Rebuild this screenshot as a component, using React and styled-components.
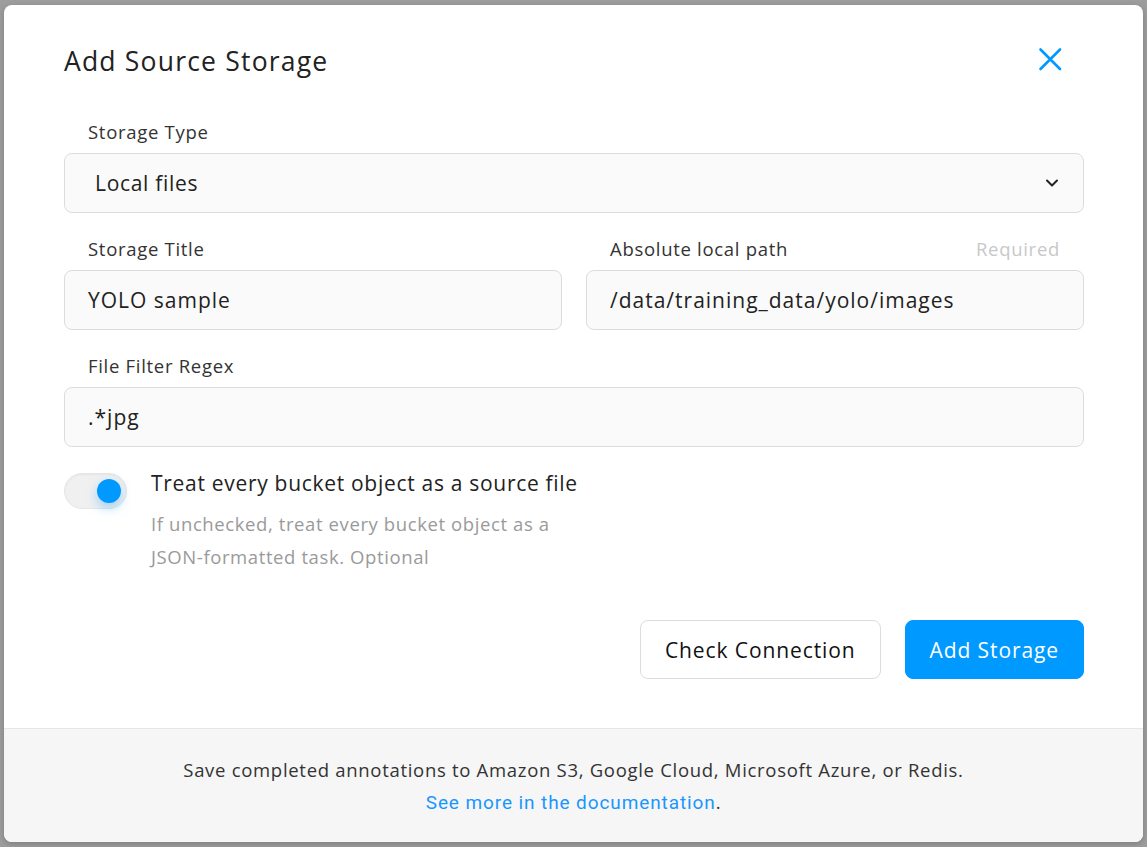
import React from "react";
import styled, { createGlobalStyle } from "styled-components";

const GlobalStyle = createGlobalStyle`
  * { box-sizing: border-box; }
  html, body { margin: 0; height: 100%; }
  body {
    background: #9d9d9d;
    padding: 5px 4px;
    font-family: "Open Sans", "Noto Sans", sans-serif;
    color: #222;
  }
  #root { height: 100%; }
`;

const Modal = styled.div`
  height: 100%;
  background: #fff;
  border-radius: 8px;
  overflow: hidden;
  display: flex;
  flex-direction: column;
  box-shadow: 0 2px 6px rgba(0, 0, 0, 0.2);
`;

const Body = styled.div`
  flex: 1;
  padding: 36px 59px 0 60px;
  display: flex;
  flex-direction: column;
`;

const Header = styled.div`
  height: 40px;
  display: flex;
  align-items: center;
  justify-content: space-between;
  margin-bottom: 38px;
`;

const Title = styled.h2`
  margin: 0;
  font-size: 26.5px;
  font-weight: 400;
  line-height: 40px;
  color: #222;
  letter-spacing: 1.2px;
`;

const CloseButton = styled.button`
  width: 44px;
  height: 44px;
  margin-right: 12px;
  margin-top: -4px;
  border: none;
  background: transparent;
  display: flex;
  align-items: center;
  justify-content: center;
  padding: 0;
  cursor: pointer;
`;

const Form = styled.div`
  display: flex;
  flex-direction: column;
  gap: 23px;
`;

const Row = styled.div`
  display: grid;
  grid-template-columns: ${(p) => (p.$cols === 2 ? "1fr 1fr" : "1fr")};
  gap: 24px;
`;

const Field = styled.div`
  display: flex;
  flex-direction: column;
  gap: 10px;
`;

const LabelRow = styled.div`
  display: flex;
  justify-content: space-between;
  padding: 0 24px;
  height: 24px;
  align-items: center;
`;

const Label = styled.span`
  font-size: 18.5px;
  letter-spacing: 0.7px;
  color: #333;
`;

const Required = styled.span`
  font-size: 18.5px;
  letter-spacing: 0.7px;
  color: #c8c8c8;
`;

const InputBox = styled.div`
  height: 60px;
  background: #fafafa;
  border: 1px solid #dcdcdc;
  border-radius: 8px;
  display: flex;
  align-items: center;
  justify-content: space-between;
  padding: ${(p) => (p.$select ? "0 24px 0 30px" : "0 23px")};
  font-size: 21px;
  letter-spacing: ${(p) => (p.$select ? "0.7px" : "1px")};
  color: #222;
`;

const ToggleRow = styled.div`
  display: flex;
  align-items: flex-start;
  gap: 24px;
  margin-top: 3px;
`;

const Track = styled.div`
  width: 63px;
  height: 36px;
  border-radius: 18px;
  background: #f0f0f0;
  border: 1px solid #e6e6e6;
  box-shadow: inset 0 1px 2px rgba(0, 0, 0, 0.05);
  display: flex;
  align-items: center;
  justify-content: flex-end;
  padding-right: 5px;
  flex-shrink: 0;
`;

const Knob = styled.div`
  width: 24px;
  height: 24px;
  border-radius: 50%;
  background: #0099ff;
  box-shadow: 0 5px 12px rgba(0, 153, 255, 0.35);
`;

const ToggleText = styled.div`
  display: flex;
  flex-direction: column;
  margin-top: -4px;
`;

const ToggleTitle = styled.div`
  font-size: 21px;
  letter-spacing: 0.7px;
  line-height: 28px;
  color: #222;
  margin-bottom: 10px;
`;

const Hint = styled.div`
  font-size: 18.5px;
  letter-spacing: 0.6px;
  line-height: 33px;
  color: #9a9a9a;
`;

const Actions = styled.div`
  display: flex;
  justify-content: flex-end;
  gap: 24px;
  margin-top: 47px;
`;

const Button = styled.button`
  height: 59px;
  padding: 0 24px;
  border-radius: 8px;
  font-family: inherit;
  font-size: 21px;
  letter-spacing: 0.9px;
  cursor: pointer;
  border: 1px solid ${(p) => (p.$primary ? "#0099ff" : "#dcdcdc")};
  background: ${(p) => (p.$primary ? "#0099ff" : "#fff")};
  color: ${(p) => (p.$primary ? "#fff" : "#111")};
`;

const Footer = styled.div`
  height: 114px;
  flex-shrink: 0;
  background: #f6f6f6;
  border-top: 1px solid #e6e6e6;
  display: flex;
  flex-direction: column;
  align-items: center;
  justify-content: center;
  padding-top: 2px;
  font-size: 18.5px;
  letter-spacing: 0.7px;
  line-height: 32px;
  color: #333;
  text-align: center;
`;

const Link = styled.a`
  color: #1a96ff;
  text-decoration: none;
  font-family: Roboto, "Open Sans", sans-serif;
  font-size: 19px;
  letter-spacing: 0.9px;
`;

const CloseIcon = () => (
  <svg width="24" height="24" viewBox="0 0 24 24" fill="none">
    <path d="M2.5 2.5L22 22M22 2.5L2.5 22" stroke="#0099ff" strokeWidth="2.6" strokeLinecap="round" />
  </svg>
);

const Chevron = () => (
  <svg width="14" height="10" viewBox="0 0 14 10" fill="none">
    <path d="M2 2.5L7 7.5L12 2.5" stroke="#222" strokeWidth="2" strokeLinecap="round" strokeLinejoin="round" />
  </svg>
);

export default function App() {
  return (
    <>
      <GlobalStyle />
      <Modal>
        <Body>
          <Header>
            <Title>Add Source Storage</Title>
            <CloseButton aria-label="Close">
              <CloseIcon />
            </CloseButton>
          </Header>
          <Form>
            <Row>
              <Field>
                <LabelRow>
                  <Label>Storage Type</Label>
                </LabelRow>
                <InputBox $select>
                  <span>Local files</span>
                  <Chevron />
                </InputBox>
              </Field>
            </Row>
            <Row $cols={2}>
              <Field>
                <LabelRow>
                  <Label>Storage Title</Label>
                </LabelRow>
                <InputBox>YOLO sample</InputBox>
              </Field>
              <Field>
                <LabelRow>
                  <Label>Absolute local path</Label>
                  <Required>Required</Required>
                </LabelRow>
                <InputBox>/data/training_data/yolo/images</InputBox>
              </Field>
            </Row>
            <Row>
              <Field>
                <LabelRow>
                  <Label>File Filter Regex</Label>
                </LabelRow>
                <InputBox>.*jpg</InputBox>
              </Field>
            </Row>
            <ToggleRow>
              <Track>
                <Knob />
              </Track>
              <ToggleText>
                <ToggleTitle>Treat every bucket object as a source file</ToggleTitle>
                <Hint>
                  If unchecked, treat every bucket object as a
                  <br />
                  JSON-formatted task. Optional
                </Hint>
              </ToggleText>
            </ToggleRow>
          </Form>
          <Actions>
            <Button>Check Connection</Button>
            <Button $primary>Add Storage</Button>
          </Actions>
        </Body>
        <Footer>
          <div>Save completed annotations to Amazon S3, Google Cloud, Microsoft Azure, or Redis.</div>
          <div>
            <Link href="#">See more in the documentation</Link>.
          </div>
        </Footer>
      </Modal>
    </>
  );
}
